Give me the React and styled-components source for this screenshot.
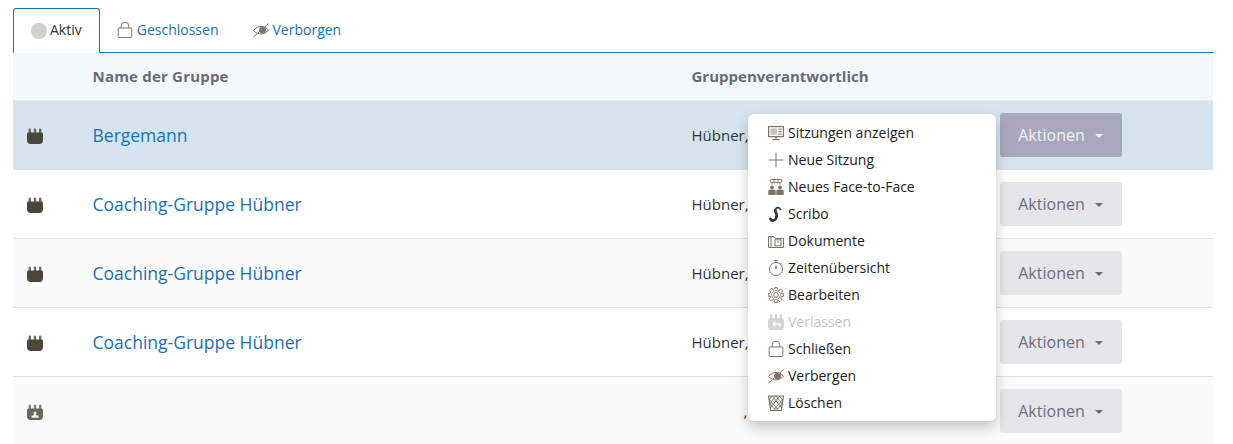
import React from "react";
import styled, { createGlobalStyle } from "styled-components";

const GlobalStyle = createGlobalStyle`
html, body {
  margin: 0;
  padding: 0;
  background: #fff;
  font-family: "Open Sans", sans-serif;
}
`
const Page = styled.div`
height: 444px;
overflow: hidden;
padding: 8px 20px 0 13px;
box-sizing: border-box;
`
const Tabs = styled.div`
display: flex;
height: 45px;
border-bottom: 1px solid #1a70b5;
box-sizing: border-box;
`
const Tab = styled.a`
display: flex;
align-items: center;
gap: ${p => p.$gap || 4}px;
height: 45px;
box-sizing: border-box;
padding: 0 17px 2px;
font-size: 14px;
color: ${p => p.$active ? "#333" : "#1a70b5"};
background: ${p => p.$active ? "#fff" : "transparent"};
border: 1px solid ${p => p.$active ? "#1a70b5" : "transparent"};
border-bottom: ${p => p.$active ? "1px solid #fff" : "none"};
border-radius: 3px 3px 0 0;
`
const PlainTab = styled(Tab)`
padding: 0 17px 2px;
border: none;
`
const Dot = styled.span`
width: 16px;
height: 16px;
margin-top: 3px;
border-radius: 50%;
background: #d2cfca;
`
const Row = styled.div`
display: grid;
grid-template-columns: 80px 599px 308px 122px;
align-items: center;
height: ${p => p.$head ? 48 : 69}px;
box-sizing: border-box;
border-bottom: 1px solid ${p => p.$head ? "#e6e8ec" : "#e4e4e8"};
background: ${p => p.$bg || "#fff"};
`
const HeadCell = styled.div`
font-size: 15px;
font-weight: 700;
color: #6a6a76;
margin-left: -0.5px;
padding-bottom: 2px;
letter-spacing: ${p => p.$wide ? 0.2 : 0}px;
`
const IconCell = styled.div`
display: flex;
padding: 2px 0 0 14px;
`
const GroupName = styled.a`
font-size: 17.5px;
color: #1a70b5;
margin-left: -0.5px;
`
const Person = styled.div`
font-size: 15px;
color: #333;
margin-left: -0.5px;
padding-left: ${p => p.$indent || 0}px;
`
const ActionWrap = styled.div`
position: relative;
`
const ActionButton = styled.button`
display: flex;
align-items: center;
justify-content: center;
gap: 10px;
width: 122px;
height: 44px;
padding: 0 1px 0 0;
border: none;
border-radius: 3px;
font-family: inherit;
font-size: 16px;
color: ${p => p.$open ? "#f2f2f6" : "#6e6e78"};
background: ${p => p.$open ? "#a7a8bc" : "#e6e5ec"};
`
const Caret = styled.span`
width: 0;
height: 0;
margin-top: 2px;
border-left: 4px solid transparent;
border-right: 4px solid transparent;
border-top: 4px solid currentColor;
`
const Menu = styled.div`
position: absolute;
top: 1px;
right: calc(100% + 4px);
width: 248px;
height: 307px;
box-sizing: border-box;
padding: 5px 0 0 20px;
background: #fff;
border-radius: 6px;
box-shadow: 0 6px 14px rgba(0, 0, 0, 0.22);
z-index: 5;
`
const MenuItem = styled.div`
display: flex;
align-items: center;
gap: 4px;
height: 27px;
font-size: 14px;
color: ${p => p.$disabled ? "#c4c4c4" : "#1c1c22"};
`
const Glyph = styled.svg`
width: 16px;
height: 16px;
flex: none;
margin-top: ${p => p.$drop || 0}px;
color: ${p => p.$disabled ? "#d5d5d3" : "#7c766a"};
`
const GroupGlyph = styled.svg`
width: 16px;
height: 16px;
color: ${p => p.$light ? "#6b675c" : "#4c4639"};
`

const GroupIcon = ({ person, light }) => (
  <GroupGlyph viewBox="0 0 16 16" $light={light}>
    <path d="M0 6.500C0 5 .8 4.500 1.500 4.500h13C15.200 4.500 16 5 16 6.500V12c0 2.500-1.500 4-3.500 4h-9C1.500 16 0 14.500 0 12z" fill="currentColor" />
    <rect x="1.600" y="0.400" width="2.400" height="5" rx="1.200" fill="currentColor" opacity="0.800" />
    <rect x="6.800" y="0.400" width="2.400" height="5" rx="1.200" fill="currentColor" opacity="0.800" />
    <rect x="12" y="0.400" width="2.400" height="5" rx="1.200" fill="currentColor" opacity="0.800" />
    {person && <path d="M8 7.500a1.400 1.400 0 0 1 1 2.400l.7 1.600H11.500v2.200h-7v-2.200h1.800l.7-1.600A1.400 1.400 0 0 1 8 7.500z" fill="#f2f0ec" />}
  </GroupGlyph>
);

const LockIcon = () => (
  <Glyph viewBox="0 0 16 16" fill="none" stroke="currentColor" strokeWidth="1">
    <rect x="1.200" y="6" width="13.600" height="9.500" rx="0.800" />
    <path d="M4.200 6V4a3.800 3.800 0 0 1 7.600 0v2" />
  </Glyph>
);

const EyeIcon = () => (
  <Glyph viewBox="0 0 16 16" fill="none" stroke="currentColor" strokeWidth="1">
    <path d="M.5 8.500C3 5.500 5.500 4.500 8 4.500s5 1 7.500 3.500C13 11 10.500 12 8 12S3 11 .5 8.500z" />
    <circle cx="9.500" cy="8" r="3" fill="currentColor" />
    <path d="M.5 15L15.500 1.500" strokeWidth="1" />
  </Glyph>
);

const ScreenIcon = () => (
  <Glyph viewBox="0 0 16 16" fill="none" stroke="currentColor" strokeWidth="1.200">
    <rect x="0.600" y="1.600" width="14.800" height="10" />
    <rect x="2.500" y="3.500" width="6.500" height="6.200" fill="currentColor" stroke="none" opacity="0.450" />
    <path d="M10.200 4.200h3.600M10.200 6.600h3.600M10.200 9h3.600" strokeWidth="1" />
    <path d="M8 11.600v2.800M4.500 14.600h7" />
  </Glyph>
);

const PlusIcon = () => (
  <Glyph viewBox="0 0 16 16" fill="none" stroke="currentColor" strokeWidth="1">
    <path d="M8 .5v15M.5 8h15" />
  </Glyph>
);

const FaceIcon = () => (
  <Glyph viewBox="0 0 16 16" fill="currentColor">
    <circle cx="4" cy="8.300" r="1.900" />
    <circle cx="12" cy="8.300" r="1.900" />
    <path d="M.3 16v-3.800c0-1 .8-1.800 1.800-1.800h3.800c1 0 1.800.8 1.800 1.800V16zM8.300 16v-3.800c0-1 .8-1.800 1.800-1.800h3.800c1 0 1.800.8 1.800 1.800V16z" />
    <g fill="none" stroke="currentColor" strokeWidth="1">
      <rect x="2" y="0.500" width="12" height="3" rx="1.500" />
      <path d="M6 .5v3M10 .5v3M4 3.500v2M12 3.500v2" />
    </g>
  </Glyph>
);

const ScriboIcon = () => (
  <Glyph viewBox="0 0 16 16" $drop={1} fill="none" stroke="#3a362e" strokeLinecap="round">
    <path d="M12.500 3.500C12 1.700 9.300 1 8 2.500" strokeWidth="1.600" />
    <path d="M7.300 4c-.3 2 1.600 3.500 1.400 6-.2 2.500-1.800 4.500-3.900 4.500-1.200 0-2.100-.6-2.300-1.700" strokeWidth="2.800" />
  </Glyph>
);

const FolderIcon = () => (
  <Glyph viewBox="0 0 16 16" fill="none" stroke="currentColor" strokeWidth="1">
    <path d="M.5 14.500v-11h5l1.500 2h8.500v9z" />
    <rect x="7" y="6.800" width="6" height="6" />
    <path d="M3 4v10.500M9 9h2" />
  </Glyph>
);

const TimerIcon = () => (
  <Glyph viewBox="0 0 16 16" fill="none" stroke="currentColor" strokeWidth="1">
    <circle cx="8" cy="9" r="6.500" />
    <path d="M6 .7h4M8 .7v2M12.800 3.200l1.300 1.300" />
    <path d="M8 5.500V9" strokeWidth="1.500" />
  </Glyph>
);

const GearIcon = () => (
  <Glyph viewBox="0 0 24 24" fill="none" stroke="currentColor" strokeWidth="1.500">
    <circle cx="12" cy="12" r="3.500" />
    <path d="M10 1h4l.6 3.200 1.900.8 2.700-1.800 2.800 2.800-1.800 2.700.8 1.900L23 10v4l-3.200.6-.8 1.900 1.800 2.700-2.800 2.800-2.700-1.800-1.900.8L13.800 23h-4l-.4-3.200-1.900-.8-2.700 1.800-2.800-2.800 1.800-2.700-.8-1.900L0 14v-4l3.200-.6.800-1.900L2.200 4.800 5 2l2.700 1.800 1.900-.8z" strokeLinejoin="round" />
    <circle cx="12" cy="12" r="6.800" strokeWidth="1" />
  </Glyph>
);

const LeaveIcon = () => (
  <Glyph viewBox="0 0 16 16" $disabled>
    <rect x="0" y="4" width="16" height="12" rx="3" fill="currentColor" />
    <path d="M3 1v4M8 1v4M13 1v4" stroke="currentColor" strokeWidth="2.200" strokeLinecap="round" />
    <path d="M12 12.500V10H5.500M7.500 7.800L5.200 10l2.300 2.200" fill="none" stroke="#fff" strokeWidth="1.300" />
  </Glyph>
);

const TrashIcon = () => (
  <Glyph viewBox="0 0 16 16" fill="none" stroke="currentColor">
    <path d="M.6 1h14.800l-2 14.500H2.600z" strokeWidth="1.200" />
    <path d="M1 4l9.500 11.500M4 1l10 12M8 1l7 8.500M1.500 8l6 7.500M11.500 1l3.500 4.500M15 4L5.500 15.500M12 1L2 13M8 1L1 9.500M4 1L.8 5M14.500 8l-6 7.500" strokeWidth="1" />
  </Glyph>
);

const menuItems = [
  { label: "Sitzungen anzeigen", Icon: ScreenIcon },
  { label: "Neue Sitzung", Icon: PlusIcon },
  { label: "Neues Face-to-Face", Icon: FaceIcon },
  { label: "Scribo", Icon: ScriboIcon },
  { label: "Dokumente", Icon: FolderIcon },
  { label: "Zeitenübersicht", Icon: TimerIcon },
  { label: "Bearbeiten", Icon: GearIcon },
  { label: "Verlassen", Icon: LeaveIcon, disabled: true },
  { label: "Schließen", Icon: LockIcon },
  { label: "Verbergen", Icon: EyeIcon },
  { label: "Löschen", Icon: TrashIcon },
];

const rows = [
  { name: "Bergemann", person: "Hübner,", bg: "#d5e4ee", open: true },
  { name: "Coaching-Gruppe Hübner", person: "Hübner," },
  { name: "Coaching-Gruppe Hübner", person: "Hübner,", bg: "#fafafa" },
  { name: "Coaching-Gruppe Hübner", person: "Hübner," },
  { name: "", person: ",", bg: "#fafafa", single: true, indent: 52 },
];

const App = () => {
  return (
    <Page>
      <GlobalStyle />
      <Tabs>
        <Tab $active $gap={3}><Dot />Aktiv</Tab>
        <PlainTab><LockIcon />Geschlossen</PlainTab>
        <PlainTab><EyeIcon />Verborgen</PlainTab>
      </Tabs>
      <Row $head $bg="#f3f8fb">
        <span />
        <HeadCell $wide>Name der Gruppe</HeadCell>
        <HeadCell>Gruppenverantwortlich</HeadCell>
        <span />
      </Row>
      {rows.map((row, i) => (
        <Row key={i} $bg={row.bg}>
          <IconCell><GroupIcon person={row.single} light={row.single} /></IconCell>
          <GroupName>{row.name}</GroupName>
          <Person $indent={row.indent}>{row.person}</Person>
          <ActionWrap>
            <ActionButton $open={row.open}>Aktionen <Caret /></ActionButton>
            {row.open && (
              <Menu>
                {menuItems.map(({ label, Icon, disabled }) => (
                  <MenuItem key={label} $disabled={disabled}><Icon />{label}</MenuItem>
                ))}
              </Menu>
            )}
          </ActionWrap>
        </Row>
      ))}
    </Page>
  );
}

export default App;
